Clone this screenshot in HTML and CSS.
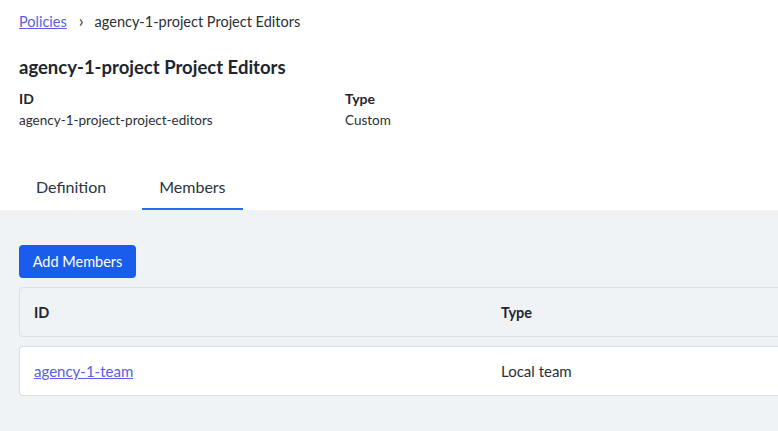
FILE: index.html
```html
<!DOCTYPE html>
<html>
<head>
<meta charset="utf-8">
<link rel="stylesheet" href="styles.css">
</head>
<body>
<div class="page">
  <header class="top">
    <nav class="crumbs">
      <a href="#" class="crumb-link">Policies</a>
      <span class="chev">&#x203A;</span>
      <span class="crumb-cur">agency-1-project Project Editors</span>
    </nav>
    <h1 class="title">agency-1-project Project Editors</h1>
    <div class="meta">
      <div class="meta-col meta-id">
        <div class="meta-label">ID</div>
        <div class="meta-value">agency-1-project-project-editors</div>
      </div>
      <div class="meta-col">
        <div class="meta-label">Type</div>
        <div class="meta-value">Custom</div>
      </div>
    </div>
    <div class="tabs">
      <div class="tab">Definition</div>
      <div class="tab active">Members</div>
    </div>
  </header>
  <main class="content">
    <button class="btn">Add Members</button>
    <div class="table">
      <div class="thead">
        <div class="cell c-id">ID</div>
        <div class="cell c-type">Type</div>
      </div>
      <div class="trow">
        <div class="cell c-id"><a href="#" class="row-link">agency-1-team</a></div>
        <div class="cell c-type">Local team</div>
      </div>
    </div>
  </main>
</div>
</body>
</html>
```

FILE: styles.css
```css
* { box-sizing: border-box; }
html, body { margin: 0; padding: 0; }
body {
  font-family: Lato, "Open Sans", sans-serif;
  color: #1e2733;
  background: #f0f3f6;
  overflow: hidden;
}
.page { width: 778px; height: 431px; }
.top {
  background: #fff;
  padding: 11px 0 0 19px;
}
.crumbs {
  display: flex;
  align-items: center;
  font-size: 14.5px;
  height: 20px;
}
.crumb-link { color: #5760e6; text-decoration: underline; }
.chev { margin: 0 11px 0 12px; font-size: 17px; color: #333; line-height: 1; position: relative; top: -1px; }
.crumb-cur { color: #2a2f36; }
.title {
  margin: 25px 0 0;
  font-size: 18.5px;
  font-weight: 700;
  line-height: 22px;
  color: #1e2630;
}
.meta {
  display: flex;
  margin-top: 12px;
}
.meta-col { display: flex; flex-direction: column; }
.meta-id { width: 326px; }
.meta-label { font-size: 14px; font-weight: 700; line-height: 18px; color: #1e2630; }
.meta-value { font-size: 13.5px; line-height: 18px; margin-top: 3px; color: #2a2f36; }
.tabs {
  display: flex;
  gap: 19px;
  margin-top: 43px;
  height: 38px;
}
.tab {
  font-size: 16px;
  color: #2a3340;
  padding: 0 17px 4px;
  line-height: 30px;
  border-bottom: 2px solid transparent;
}
.tab.active { border-bottom-color: #2a6cf0; }
.content {
  padding: 35px 0 0 19px;
}
.btn {
  display: block;
  background: #1a5ceb;
  color: #fff;
  border: none;
  border-radius: 4px;
  font-family: inherit;
  font-size: 14.5px;
  height: 33px;
  width: 117px;
  padding: 0;
}
.table { margin-top: 9px; }
.thead, .trow {
  display: flex;
  align-items: center;
  height: 50px;
  border: 1px solid #dcdfe3;
  border-right: none;
  border-radius: 4px 0 0 4px;
}
.thead { background: #f0f3f6; font-weight: 700; font-size: 14.5px; color: #1e2630; }
.trow { background: #fff; margin-top: 9px; font-size: 15px; color: #2a2f36; }
.c-id { width: 481px; padding-left: 14px; }
.c-type { flex: 1; }
.row-link { color: #5760e6; text-decoration: underline; }
```
